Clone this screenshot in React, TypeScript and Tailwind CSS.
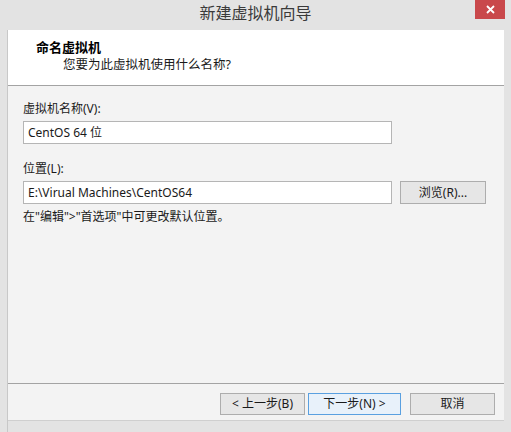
import React from 'react'

const font = { fontFamily: '"Noto Sans", "Noto Sans CJK SC", sans-serif' }

function WinButton({ label, primary = false, className = '' }: { label: string; primary?: boolean; className?: string }) {
  return (
    <button
      className={`h-[22px] flex items-center justify-center text-[12px] text-[#1a1a1a] border ${
        primary ? 'border-[#5aa0e0] bg-[#e8f1fa]' : 'border-[#adadad] bg-[#e6e6e6]'
      } ${className}`}
    >
      {label}
    </button>
  )
}

export default function App() {
  return (
    <div className="w-[511px] h-[432px] bg-[#e3e3e3] flex flex-col overflow-hidden" style={font}>
      {/* Title bar */}
      <div className="relative h-[26px] flex items-center justify-center shrink-0">
        <span className="text-[16px] text-[#3a3a3a] leading-none">新建虚拟机向导</span>
        <div className="absolute top-0 right-[6px] w-[30px] h-[19px] bg-[#c9484b] flex items-center justify-center">
          <svg width="9" height="9" viewBox="0 0 9 9">
            <path d="M1 1 L8 8 M8 1 L1 8" stroke="#fff" strokeWidth="1.8" />
          </svg>
        </div>
      </div>

      <div className="flex-1 flex flex-col mx-[7px] mt-[4px] border-l border-[#c8c8c8]">
        {/* Header */}
        <div className="h-[56px] bg-white border-b border-[#a3a3a3] pl-[28px] pt-[8px] shrink-0">
          <div className="text-[13px] font-bold text-black leading-[18px]">命名虚拟机</div>
          <div className="text-[12.5px] text-[#1a1a1a] leading-[18px] pl-[27px]">您要为此虚拟机使用什么名称?</div>
        </div>

        {/* Body */}
        <div className="flex-1 bg-[#f3f3f3] flex flex-col">
          <div className="flex-1 flex flex-col px-[15px] pt-[15px]">
            <div className="text-[12px] text-[#1a1a1a] leading-[16px]">虚拟机名称(V):</div>
            <div className="mt-[4px] w-[369px] h-[23px] bg-white border border-[#b5b5b5] flex items-center px-[4px] text-[12px] text-[#1a1a1a]">
              CentOS 64 位
            </div>

            <div className="mt-[17px] text-[12px] text-[#1a1a1a] leading-[16px]">位置(L):</div>
            <div className="mt-[4px] flex items-center gap-[8px]">
              <div className="w-[369px] h-[23px] bg-white border border-[#b5b5b5] flex items-center px-[4px] text-[12px] text-[#1a1a1a]">
                E:\Virual Machines\CentOS64
              </div>
              <WinButton label="浏览(R)..." className="w-[86px] h-[23px]" />
            </div>
            <div className="mt-[5px] text-[12px] text-[#1a1a1a] leading-[16px]">{'在"编辑">"首选项"中可更改默认位置。'}</div>
          </div>

          {/* Footer */}
          <div className="h-[37px] border-t border-[#a3a3a3] flex items-start justify-end pt-[9px] pr-[9px] shrink-0">
            <WinButton label="< 上一步(B)" className="w-[85px]" />
            <WinButton label="下一步(N) >" primary className="w-[93px] ml-[3px]" />
            <WinButton label="取消" className="w-[85px] ml-[9px]" />
          </div>
        </div>
        <div className="h-[12px] border-t border-[#cfcfcf] shrink-0" />
      </div>
    </div>
  )
}
